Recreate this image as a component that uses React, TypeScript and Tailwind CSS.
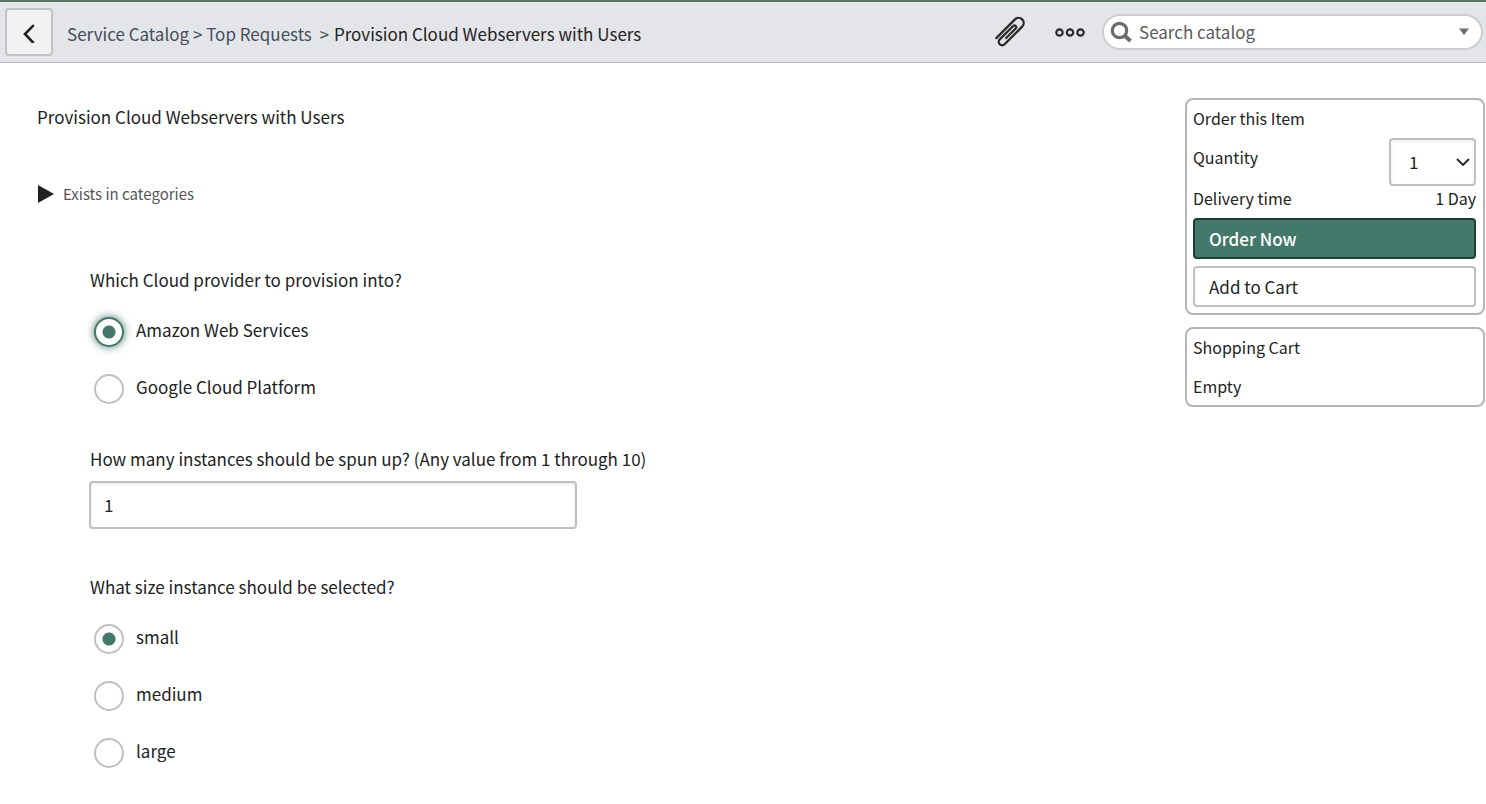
import React, { useState } from "react";

type ChoiceGroupProps = {
  name: string;
  legend: string;
  options: string[];
  initial: string;
  highlight?: boolean;
  className: string;
};

function ChoiceGroup({ name, legend, options, initial, highlight, className }: ChoiceGroupProps) {
  const [value, setValue] = useState(initial);
  return (
    <fieldset className={className}>
      <legend className="h-7 pl-px leading-7">{legend}</legend>
      <div className="flex flex-col items-start gap-[27px] pt-[23px] pl-[5px]">
        {options.map((option) => (
          <label key={option} className="flex h-[30px] items-center gap-3">
            <input
              type="radio"
              name={name}
              checked={value === option}
              onChange={() => setValue(option)}
              className={
                "size-[30px] appearance-none rounded-full border-2 bg-white checked:bg-[radial-gradient(circle,#44786b_6px,#fff_7px)] " +
                (highlight && value === option
                  ? "border-[#44786b] shadow-[0_0_8px_#44786b]"
                  : "border-[#c0c0c0]")
              }
            />
            <span className="pb-1">{option}</span>
          </label>
        ))}
      </div>
    </fieldset>
  );
}

function Paperclip() {
  return (
    <svg viewBox="0 0 32 32" className="size-8 overflow-visible" fill="none" stroke="#2a2a2a" strokeWidth="2.3" strokeLinecap="round">
      <path
        transform="rotate(45 16 16)"
        d="M10.6 30V3.6a5.1 5.1 0 0 1 10.2 0V28.5a3.4 3.4 0 0 1-6.8 0V9.5a1.75 1.75 0 0 1 3.5 0V23"
      />
    </svg>
  );
}

function Header() {
  return (
    <header className="flex h-[63px] items-center border-t-2 border-b border-t-[#5a7568] border-b-[#b5b8bc] bg-[#e4e5e8] pr-[3px] pl-[5px]">
      <button aria-label="Back" className="flex size-12 items-center justify-center rounded border-2 border-[#c2c3c4] bg-[#f0f1f3]">
        <svg viewBox="0 0 14 22" className="h-[22px] w-[14px]" fill="none" stroke="#222" strokeWidth="2.6" strokeLinecap="round">
          <path d="M11 4.8 3 13l8 8.4" />
        </svg>
      </button>
      <nav aria-label="Breadcrumb" className="flex grow gap-[5px] pt-1 pl-[14px] whitespace-pre">
        <span className="text-[#434d5c]">
          <a href="#catalog">Service Catalog</a>
          {" > "}
          <a href="#top-requests">Top Requests</a>
          {"  >"}
        </span>
        <span>Provision Cloud Webservers with Users</span>
      </nav>
      <button aria-label="Attachments" className="mr-7">
        <Paperclip />
      </button>
      <button aria-label="More options" className="mr-4">
        <svg viewBox="0 0 32 12" className="h-3 w-8" fill="none" stroke="#2a2a2a" strokeWidth="2.2">
          <circle cx="5.5" cy="6.5" r="3.2" />
          <circle cx="16" cy="6.5" r="3.2" />
          <circle cx="26.5" cy="6.5" r="3.2" />
        </svg>
      </button>
      <div className="flex h-9 w-[381px] items-center rounded-full border-2 border-[#cccdcd] bg-white pr-[11px] pl-[6px]">
        <svg viewBox="0 0 22 22" className="size-[22px]" fill="none" stroke="#6b6b6b" strokeWidth="3.2">
          <circle cx="9.5" cy="9.5" r="7.2" />
          <path d="m14.5 14.5 6 5.5" strokeWidth="4" />
        </svg>
        <input
          type="search"
          aria-label="Search catalog"
          placeholder="Search catalog"
          className="h-8 min-w-0 grow bg-transparent pb-[2px] pl-[7px] outline-none placeholder:text-[#5a5a5a]"
        />
        <button aria-label="Search options">
          <svg viewBox="0 0 12 8" className="h-2 w-3" fill="#6b6b6b">
            <path d="M1 .5h10L6 7z" />
          </svg>
        </button>
      </div>
    </header>
  );
}

function OrderPanel() {
  return (
    <aside className="mt-[35px] mr-px w-[300px] shrink-0 text-base">
      <section className="rounded-lg border-2 border-[#b5b5b5] pr-[7px] pb-[6px] pl-[6px]">
        <h2 className="h-[38px] leading-9">Order this Item</h2>
        <div className="flex h-12 justify-between">
          <label htmlFor="quantity" className="leading-[38px]">Quantity</label>
          <div className="grid w-[87px] items-center">
            <select
              id="quantity"
              defaultValue="1"
              className="col-start-1 row-start-1 h-12 appearance-none rounded border-2 border-[#c0c0c0] bg-white pl-[18px] text-[17px] shadow-[inset_0_1px_3px_#0000001a]"
            >
              {["1", "2", "3", "4", "5"].map((n) => (
                <option key={n}>{n}</option>
              ))}
            </select>
            <svg viewBox="0 0 14 10" className="pointer-events-none col-start-1 row-start-1 mr-[6px] h-[10px] w-[14px] justify-self-end" fill="none" stroke="#222" strokeWidth="1.8">
              <path d="m1 2 6 6 6-6" />
            </svg>
          </div>
        </div>
        <div className="mb-2 flex h-6 justify-between leading-6">
          <span>Delivery time</span>
          <span>1 Day</span>
        </div>
        <button className="block h-[41px] w-full rounded border-2 border-[#1f4038] bg-[#44786b] px-[14px] text-left text-[17px] font-medium text-white">
          Order Now
        </button>
        <button className="mt-[7px] block h-[41px] w-full rounded border-2 border-[#c0c0c0] bg-white px-[14px] text-left text-[17px]">
          Add to Cart
        </button>
      </section>
      <section className="mt-3 rounded-lg border-2 border-[#b5b5b5] px-[6px]">
        <h2 className="h-[38px] leading-9">Shopping Cart</h2>
        <p className="leading-[38px]">Empty</p>
      </section>
    </aside>
  );
}

export default function App() {
  return (
    <div className="min-h-screen bg-white font-['Noto_Sans_CJK_SC','Noto_Sans',sans-serif] text-[17px] text-[#222]">
      <Header />
      <div className="flex justify-between pb-9 pl-[37px]">
        <main className="pt-[34px]">
          <h1 className="h-10 leading-10">Provision Cloud Webservers with Users</h1>
          <details className="mt-[45px]">
            <summary className="flex h-6 list-none items-center gap-2 text-[15px] text-[#555]">
              <svg viewBox="0 0 18 20" className="h-5 w-[18px]" fill="#222">
                <path d="M1 1v18l16-9z" />
              </svg>
              Exists in categories
            </summary>
            <p className="pl-[26px] text-[15px]">Top Requests</p>
          </details>
          <form className="pl-[52px]">
            <ChoiceGroup
              name="provider"
              legend="Which Cloud provider to provision into?"
              options={["Amazon Web Services", "Google Cloud Platform"]}
              initial="Amazon Web Services"
              highlight
              className="mt-[60px]"
            />
            <div className="mt-[41px] flex flex-col gap-2">
              <label htmlFor="instances" className="h-7 pl-px leading-7">
                How many instances should be spun up? (Any value from 1 through 10)
              </label>
              <input
                id="instances"
                type="text"
                defaultValue="1"
                className="h-12 w-[488px] rounded border-2 border-[#c0c0c0] px-[13px] pb-[2px] shadow-[inset_0_1px_3px_#0000001a]"
              />
            </div>
            <ChoiceGroup
              name="size"
              legend="What size instance should be selected?"
              options={["small", "medium", "large"]}
              initial="small"
              className="mt-11"
            />
          </form>
        </main>
        <OrderPanel />
      </div>
    </div>
  );
}
